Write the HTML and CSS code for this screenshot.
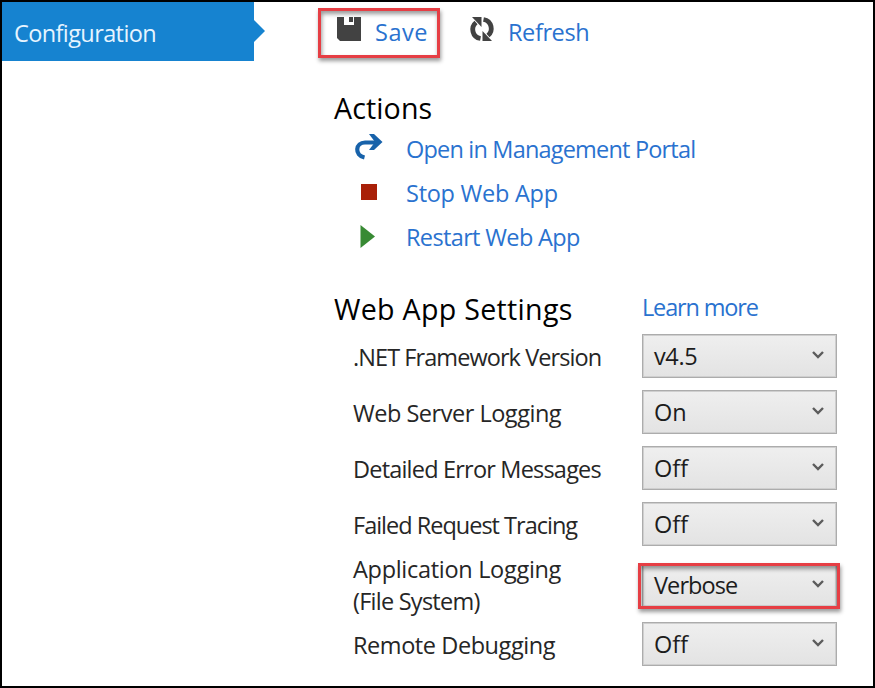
FILE: index.html
```html
<!DOCTYPE html>
<html lang="en">
<head>
<meta charset="utf-8">
<title>Configuration</title>
<link rel="stylesheet" href="styles.css">
</head>
<body>
<div class="window">
  <nav class="sidebar">
    <div class="tab"><span class="t-configuration">Configuration</span></div>
  </nav>
  <main class="content">
    <div class="toolbar">
      <a class="tool save">
        <svg class="save-icon" viewBox="0 0 24 24"><path fill="#424242" d="M0 0H24V24H3L0 21Z"/><path fill="#fff" d="M7 0H17V8H7Z"/><path fill="#424242" d="M12 0H16V5H12Z"/></svg>
        <span class="t-save">Save</span>
      </a>
      <a class="tool refresh">
        <svg class="refresh-icon" viewBox="0 0 24 24"><g><path fill="none" stroke="#424242" stroke-width="4.800" d="M10.500 21.500C2 20 .5 10 6 5.500"/><path fill="#424242" d="M2 0H11.500V10Z"/></g><g transform="rotate(180 12 12)"><path fill="none" stroke="#424242" stroke-width="4.800" d="M10.500 21.500C2 20 .5 10 6 5.500"/><path fill="#424242" d="M2 0H11.500V10Z"/></g></svg>
        <span class="t-refresh">Refresh</span>
      </a>
    </div>
    <section class="actions">
      <h2 class="t-actions">Actions</h2>
      <a class="action">
        <svg viewBox="0 0 28 26"><path fill="none" stroke="#1762aa" stroke-width="4.200" d="M9.500 22.500C-1 20 .5 7.500 10 7.500H23"/><path fill="#1762aa" d="M14 -1H19L27.500 7L19 15H14L20 7Z"/></svg>
        <span class="t-open">Open in Management Portal</span>
      </a>
      <a class="action">
        <svg viewBox="0 0 28 26"><path fill="#a92008" d="M6 5H22V21H6Z"/></svg>
        <span class="t-stop">Stop Web App</span>
      </a>
      <a class="action">
        <svg viewBox="0 0 28 26"><path fill="#388a34" d="M5.500 2L20 13.500L5.500 25Z"/></svg>
        <span class="t-restart">Restart Web App</span>
      </a>
    </section>
    <section class="settings">
      <div class="settings-head"><h2 class="t-settings">Web App Settings</h2><a class="t-learn">Learn more</a></div>
      <div class="row"><label class="t-net">.NET Framework Version</label><div class="select"><span class="t-v45">v4.5</span><svg viewBox="0 0 12 8"><path d="M1 1L6 6L11 1"/></svg></div></div>
      <div class="row"><label class="t-server">Web Server Logging</label><div class="select"><span class="t-on">On</span><svg viewBox="0 0 12 8"><path d="M1 1L6 6L11 1"/></svg></div></div>
      <div class="row"><label class="t-detailed">Detailed Error Messages</label><div class="select"><span class="t-off">Off</span><svg viewBox="0 0 12 8"><path d="M1 1L6 6L11 1"/></svg></div></div>
      <div class="row"><label class="t-failed">Failed Request Tracing</label><div class="select"><span class="t-off">Off</span><svg viewBox="0 0 12 8"><path d="M1 1L6 6L11 1"/></svg></div></div>
      <div class="row tall"><label><span class="t-app">Application Logging</span><br><span class="t-file">(File System)</span></label><div class="select marked"><span class="t-verbose">Verbose</span><svg viewBox="0 0 12 8"><path d="M1 1L6 6L11 1"/></svg></div></div>
      <div class="row"><label class="t-remote">Remote Debugging</label><div class="select"><span class="t-off">Off</span><svg viewBox="0 0 12 8"><path d="M1 1L6 6L11 1"/></svg></div></div>
    </section>
  </main>
</div>
</body>
</html>
```
FILE: styles.css
```css
* { box-sizing: border-box; }
body { margin: 0; font: 23.5px/32px "Open Sans", "Noto Sans", sans-serif; color: #262626; background: #fff; }
.window { width: 875px; height: 688px; border: 2px solid #000; display: flex; overflow: hidden; white-space: nowrap; }
a { color: #2a72cf; }
svg { display: block; flex: none; overflow: visible; }
h2 { margin: 0; font-size: 28.6px; line-height: 36px; font-weight: 400; color: #000; }
.sidebar { width: 316px; flex: none; }
.tab { position: relative; width: 252px; height: 59px; padding: 15px 0 0 12px; background: #1683d0; color: #e6f4ff; }
.tab::after { content: ""; position: absolute; left: 252px; top: 18px; border: solid transparent; border-width: 11px 0 11px 11px; border-left-color: #1683d0; }
.content { flex: 1; }
.toolbar { display: flex; padding-top: 6px; height: 86px; }
.tool { display: flex; }
.save { width: 122px; height: 50px; padding: 5px 0 0 16px; gap: 14px; border: 3px solid #e63e44; box-shadow: 1px 3px 4px #0006, inset 1px 3px 4px #0006; }
.save-icon { width: 24px; height: 24px; margin-top: 1px; }
.refresh { padding: 8px 0 0 30px; gap: 14px; }
.refresh-icon { width: 24px; height: 24px; margin-top: 1px; }
.actions { padding-left: 16px; }
.actions h2 { padding-top: 2px; height: 45px; }
.action { display: flex; height: 44px; padding: 0 0 0 21px; gap: 23px; }
.action svg { width: 28px; height: 26px; margin-top: 2px; }
.settings { padding-left: 16px; margin-top: 26px; }
.settings-head { display: grid; grid-template-columns: 308px 1fr; height: 43px; align-items: start; }
.row { display: grid; grid-template-columns: 289px 195px; align-items: center; height: 44px; margin: 0 0 12px 19px; }
.row label { padding-top: 1px; }
.tall { height: 64px; margin-top: -5px; margin-bottom: 5px; }
.row.tall label { padding-top: 0; }
.select { position: relative; height: 44px; border: 1px solid #acacac; box-shadow: inset 0 0 0 1px #cfcfcf; background: linear-gradient(#efefef, #e3e3e3); display: flex; align-items: center; justify-content: space-between; padding: 0 12px 0 11px; color: #1c1c1c; }
.select svg { width: 12px; height: 8px; margin-top: -3px; }
.select path { fill: none; stroke: #5c5c5c; stroke-width: 2.4; }
.marked::after { content: ""; position: absolute; inset: -1px -4px -3px -5px; border: 3px solid #e63e44; box-shadow: 1px 3px 4px #0006, inset 1px 3px 4px #0006; }

/* Per-label tracking */
.t-configuration { letter-spacing: -0.6px; }
.t-save { letter-spacing: 0.5px; }
.t-refresh { letter-spacing: -0.4px; }
.t-actions { letter-spacing: 0.1px; }
.t-open { letter-spacing: -0.81px; }
.t-stop { letter-spacing: -0.26px; }
.t-restart { letter-spacing: -0.64px; }
.t-settings { letter-spacing: 0.3px; }
.t-learn { letter-spacing: -1.15px; }
.t-net { letter-spacing: -0.93px; }
.t-server { letter-spacing: -0.48px; }
.t-detailed { letter-spacing: -0.8px; }
.t-failed { letter-spacing: -1px; }
.t-app { letter-spacing: -0.3px; }
.t-file { letter-spacing: -0.75px; }
.t-remote { letter-spacing: -0.43px; }
.t-v45 { letter-spacing: -0.4px; }
.t-verbose { letter-spacing: -0.9px; }
```
